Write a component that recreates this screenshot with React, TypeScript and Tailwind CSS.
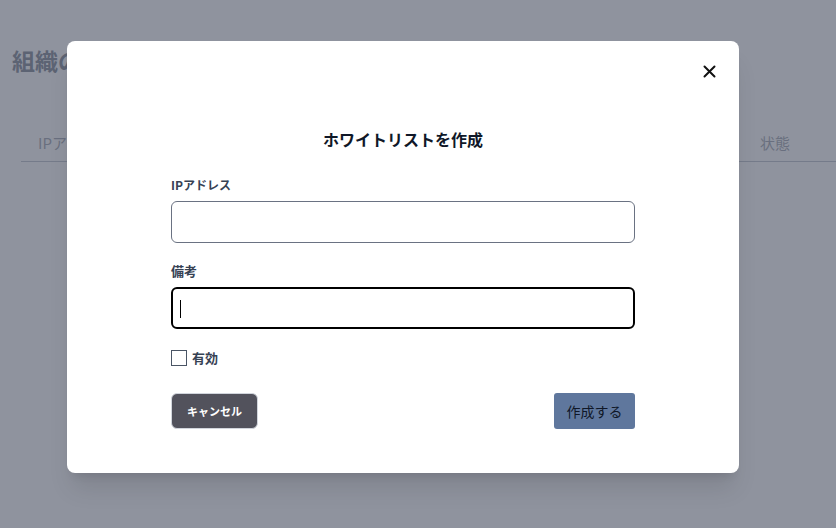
import React from "react";

export default function App() {
  const font = { fontFamily: '"Noto Sans CJK JP", "Noto Sans", sans-serif' };
  return (
    <div className="relative w-[836px] h-[528px] overflow-hidden bg-white" style={font}>
      {/* page underneath */}
      <div className="pl-3 pt-[42px]">
        <h1 className="text-[23px] font-bold text-gray-700 leading-[36px]">組織のIPホワイトリスト</h1>
        <div className="mt-[46px] ml-[9px] flex border-b border-gray-400 h-[38px] items-end pb-[6px]">
          <div className="pl-[17px] text-[15px] text-gray-500 leading-[24px]">IPアドレス</div>
          <div className="ml-auto w-[76px] text-[15px] text-gray-500 leading-[24px]">状態</div>
        </div>
      </div>

      {/* overlay */}
      <div className="absolute inset-0 bg-[rgba(105,111,126,0.75)]" />

      {/* modal */}
      <div className="absolute left-[67px] top-[41px] w-[672px] h-[432px] bg-white rounded-lg shadow-xl">
        <button className="absolute right-[23px] top-[23px] w-[14px] h-[14px] flex items-center justify-center">
          <svg width="13" height="13" viewBox="0 0 13 13" fill="none">
            <path d="M1.5 1.5L11.5 11.5M11.5 1.5L1.5 11.5" stroke="#111" strokeWidth="2" strokeLinecap="round" />
          </svg>
        </button>
        <div className="w-[464px] mx-auto pt-[84px]">
          <h2 className="text-center text-[16px] font-bold text-gray-900 leading-[28px]">ホワイトリストを作成</h2>
          <div className="mt-[22px]">
            <label className="block text-[12px] font-bold text-gray-700 leading-[20px]">IPアドレス</label>
            <input className="mt-[6px] block w-full h-[42px] rounded-md border border-gray-500 outline-none px-2" />
          </div>
          <div className="mt-[18px]">
            <label className="block text-[13px] font-bold text-gray-700 leading-[20px]">備考</label>
            <div className="mt-[6px] relative w-full h-[42px] rounded-md border-2 border-black">
              <div className="absolute left-[7px] top-[11px] w-px h-[18px] bg-black" />
            </div>
          </div>
          <div className="mt-[19px] flex items-center gap-[5px]">
            <div className="w-[16px] h-[16px] border border-gray-600 bg-white" />
            <span className="text-[13px] font-bold text-gray-700 leading-[20px]">有効</span>
          </div>
          <div className="mt-[25px] flex justify-between items-center">
            <button className="w-[87px] h-[36px] rounded-md bg-[#52525c] border border-gray-300 text-white text-[11px] font-bold">キャンセル</button>
            <button className="w-[81px] h-[36px] rounded-[3px] bg-[#5f779d] text-gray-900 text-[14px]">作成する</button>
          </div>
        </div>
      </div>
    </div>
  );
}
